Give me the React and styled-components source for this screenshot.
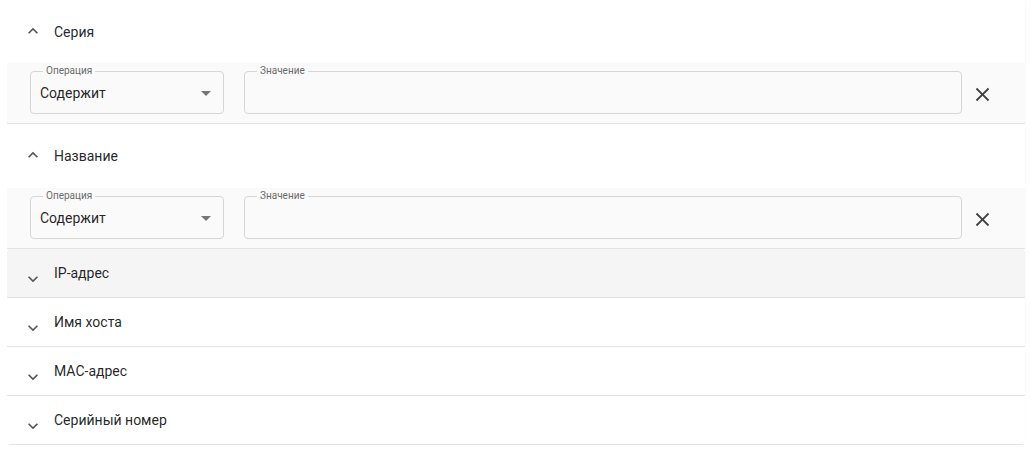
import React from 'react';
import styled, { createGlobalStyle } from 'styled-components';

const GlobalStyle = createGlobalStyle`
  body {
    margin: 0;
    background: #ffffff;
    font-family: Roboto, "Noto Sans", sans-serif;
    color: rgba(0, 0, 0, 0.87);
  }
`;

const Page = styled.div`
  padding: 0 8px 0 7px;
`;

const Panel = styled.div`
  background: #ffffff;
  border-bottom: 1px solid #e3e3e3;
  border-radius: ${(p) => (p.$last ? '0 0 4px 4px' : '0')};
  box-shadow: 1px 0 1px -1px rgba(0, 0, 0, 0.12);
`;

const Summary = styled.div`
  display: flex;
  align-items: center;
  gap: 11px;
  height: ${(p) => (p.$open ? (p.$first ? '63px' : '64px') : '48px')};
  padding-left: 16px;
  background: ${(p) => (p.$hover ? '#f5f5f5' : '#ffffff')};
  border-radius: ${(p) => (p.$hover ? '4px 4px 0 0' : '0')};
  font-size: 14px;
  cursor: pointer;
`;

const Chevron = styled.svg`
  width: 20px;
  height: 20px;
  fill: #555555;
  flex-shrink: 0;
  position: relative;
  top: ${(p) => (p.$open ? '-1px' : '6px')};
`;

const Title = styled.span`
  line-height: 20px;
`;

const Details = styled.div`
  display: flex;
  align-items: flex-start;
  gap: 20px;
  padding: 3px 23px 9px 23px;
  background: #fafafa;
`;

const Field = styled.fieldset`
  margin: 0;
  height: 48px;
  box-sizing: border-box;
  padding: 0 12px;
  border: 1px solid #d6d6d6;
  border-radius: 4px;
  width: ${(p) => p.$width || 'auto'};
  flex: ${(p) => (p.$grow ? '1' : '0 0 auto')};
  min-width: 0;
`;

const Legend = styled.legend`
  padding: 0 3px;
  font-size: 10px;
  line-height: 10px;
  color: #6b6b6b;
`;

const SelectValue = styled.div`
  display: flex;
  align-items: center;
  justify-content: space-between;
  height: 33px;
  margin: 0 -2px 0 -3px;
  font-size: 14px;
  color: rgba(0, 0, 0, 0.87);
`;

const Caret = styled.svg`
  width: 24px;
  height: 24px;
  fill: #757575;
  margin-right: -5px;
`;

const ValueInput = styled.input`
  display: block;
  width: 100%;
  height: 33px;
  border: none;
  outline: none;
  background: transparent;
  font: inherit;
  font-size: 14px;
  padding: 0;
`;

const CloseButton = styled.button`
  flex: 0 0 40px;
  height: 40px;
  margin: 8px 0 0 -20px;
  display: flex;
  align-items: center;
  justify-content: center;
  border: none;
  background: transparent;
  padding: 0;
  cursor: pointer;

  svg {
    width: 23px;
    height: 23px;
    fill: #424242;
  }
`;

const filters = [
  { title: 'Серия', open: true },
  { title: 'Название', open: true },
  { title: 'IP-адрес', hover: true },
  { title: 'Имя хоста' },
  { title: 'MAC-адрес' },
  { title: 'Серийный номер' },
];

const ExpandLess = () => <path d="M12 8l-6 6 1.41 1.41L12 10.83l4.59 4.58L18 14z" />;
const ExpandMore = () => <path d="M16.59 8.59 12 13.17 7.41 8.59 6 10l6 6 6-6z" />;

function FilterPanel({ item, first, last }) {
  return (
    <Panel $last={last}>
      <Summary $open={item.open} $first={first} $hover={item.hover}>
        <Chevron $open={item.open} viewBox="0 0 24 24">
          {item.open ? <ExpandLess /> : <ExpandMore />}
        </Chevron>
        <Title>{item.title}</Title>
      </Summary>
      {item.open && (
        <Details>
          <Field $width="194px">
            <Legend>Операция</Legend>
            <SelectValue>
              <span>Содержит</span>
              <Caret viewBox="0 0 24 24">
                <path d="M7 10l5 5 5-5z" />
              </Caret>
            </SelectValue>
          </Field>
          <Field $grow>
            <Legend>Значение</Legend>
            <ValueInput />
          </Field>
          <CloseButton aria-label="Удалить">
            <svg viewBox="0 0 24 24">
              <path d="M19 6.41 17.59 5 12 10.59 6.41 5 5 6.41 10.59 12 5 17.59 6.41 19 12 13.41 17.59 19 19 17.59 13.41 12z" />
            </svg>
          </CloseButton>
        </Details>
      )}
    </Panel>
  );
}

export default function App() {
  return (
    <>
      <GlobalStyle />
      <Page>
        {filters.map((item, i) => (
          <FilterPanel
            key={item.title}
            item={item}
            first={i === 0}
            last={i === filters.length - 1}
          />
        ))}
      </Page>
    </>
  );
}
